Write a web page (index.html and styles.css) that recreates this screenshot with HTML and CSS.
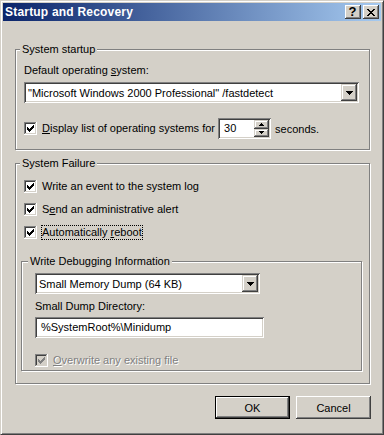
FILE: index.html
```html
<!DOCTYPE html>
<html lang="en">
<head>
  <meta charset="UTF-8">
  <meta name="viewport" content="width=device-width, initial-scale=1.0">
  <title>Startup and Recovery</title>
  <link rel="stylesheet" href="styles.css">
</head>
<body>
  <!-- shared glyphs -->
  <svg class="defs" aria-hidden="true">
    <symbol id="cb-on" viewBox="0 0 13 13">
      <rect width="13" height="13" fill="#fff"/>
      <path d="M0 0h12v1H1v11H0z" fill="#808080"/>
      <path d="M1 1h10v1H2v9H1z" fill="#404040"/>
      <path d="M11 1h1v11H1v-1h10z" fill="#d4d0c8"/>
      <path d="M9 3h1v1H9zM8 4h2v1H8zM3 5h1v1H3zM7 5h3v1H7zM3 6h2v1H3zM6 6h3v1H6zM3 7h5v1H3zM4 8h3v1H4zM5 9h1v1H5z" fill="#000"/>
    </symbol>
    <symbol id="cb-off" viewBox="0 0 13 13">
      <rect width="13" height="13" fill="#fff"/>
      <rect x="2" y="2" width="9" height="9" fill="#d4d0c8"/>
      <path d="M0 0h12v1H1v11H0z" fill="#808080"/>
      <path d="M1 1h10v1H2v9H1z" fill="#404040"/>
      <path d="M11 1h1v11H1v-1h10z" fill="#d4d0c8"/>
      <path d="M9 3h1v1H9zM8 4h2v1H8zM3 5h1v1H3zM7 5h3v1H7zM3 6h2v1H3zM6 6h3v1H6zM3 7h5v1H3zM4 8h3v1H4zM5 9h1v1H5z" fill="#808080"/>
    </symbol>
    <symbol id="drop" viewBox="0 0 7 4">
      <path d="M0 0h7v1H0zM1 1h5v1H1zM2 2h3v1H2zM3 3h1v1H3z" fill="#000"/>
    </symbol>
    <symbol id="up" viewBox="0 0 5 3">
      <path d="M2 0h1v1H2zM1 1h3v1H1zM0 2h5v1H0z" fill="#000"/>
    </symbol>
    <symbol id="down" viewBox="0 0 5 3">
      <path d="M0 0h5v1H0zM1 1h3v1H1zM2 2h1v1H2z" fill="#000"/>
    </symbol>
    <symbol id="close" viewBox="0 0 8 7">
      <path d="M0 0h2v1H0zM6 0h2v1H6zM1 1h2v1H1zM5 1h2v1H5zM2 2h4v1H2zM3 3h2v1H3zM2 4h4v1H2zM1 5h2v1H1zM5 5h2v1H5zM0 6h2v1H0zM6 6h2v1H6z" fill="#000"/>
    </symbol>
  </svg>

  <div class="dialog">
    <div class="titlebar">
      <span class="title">Startup and Recovery</span>
      <span class="cap-btn help">?</span>
      <span class="cap-btn"><svg width="8" height="7"><use href="#close"/></svg></span>
    </div>

    <div class="client">
      <div class="group startup">
        <span class="caption">System startup</span>
        <div class="label">Default operating <u>s</u>ystem:</div>
        <div class="combo os">
          <span class="value">"Microsoft Windows 2000 Professional" /fastdetect</span>
          <span class="drop-btn"><svg width="7" height="4"><use href="#drop"/></svg></span>
        </div>
        <div class="row">
          <svg class="cb" width="13" height="13"><use href="#cb-on"/></svg>
          <span class="lbl"><u>D</u>isplay list of operating systems for</span>
          <div class="spin">
            <span class="value">30</span>
            <span class="updown">
              <span class="ud-btn"><svg width="5" height="3"><use href="#up"/></svg></span>
              <span class="ud-btn"><svg width="5" height="3"><use href="#down"/></svg></span>
            </span>
          </div>
          <span class="after">seconds.</span>
        </div>
      </div>

      <div class="group failure">
        <span class="caption">System Failure</span>
        <div class="row cbrow">
          <svg class="cb" width="13" height="13"><use href="#cb-on"/></svg>
          <span class="lbl">Write an event to the system log</span>
        </div>
        <div class="row cbrow">
          <svg class="cb" width="13" height="13"><use href="#cb-on"/></svg>
          <span class="lbl">S<u>e</u>nd an administrative alert</span>
        </div>
        <div class="row cbrow">
          <svg class="cb" width="13" height="13"><use href="#cb-on"/></svg>
          <span class="lbl focus">Automatically <u>r</u>eboot</span>
        </div>

        <div class="group debug">
          <span class="caption">Write Debugging Information</span>
          <div class="combo dump">
            <span class="value">Small Memory Dump (64 KB)</span>
            <span class="drop-btn"><svg width="7" height="4"><use href="#drop"/></svg></span>
          </div>
          <div class="label dir">Small Dump Directory:</div>
          <div class="edit">%SystemRoot%\Minidump</div>
          <div class="row cbrow disabled">
            <svg class="cb" width="13" height="13"><use href="#cb-off"/></svg>
            <span class="lbl"><u>O</u>verwrite any existing file</span>
          </div>
        </div>
      </div>

      <div class="buttons">
        <button class="btn default">OK</button>
        <button class="btn">Cancel</button>
      </div>
    </div>
  </div>
</body>
</html>
```

FILE: styles.css
```css
* {
  margin: 0; padding: 0; box-sizing: border-box;
}
body {
  background: #d4d0c8;
  color: #000;
  font: 11px "Liberation Sans", Arial, sans-serif;
}
.defs {
  position: absolute;
  width: 0;
  height: 0;
}
svg { display: block; }

/* window frame */
.dialog {
  width: 384px;
  height: 435px;
  background: #d4d0c8;
  border: 1px solid;
  border-color: #d4d0c8 #404040 #404040 #d4d0c8;
  box-shadow: inset 1px 1px #fff, inset -1px -1px #808080;
  padding: 2px;
}
.titlebar {
  height: 18px;
  display: flex;
  align-items: center;
  gap: 2px;
  padding: 0 2px;
  background: linear-gradient(to right, #0a246a, #a6caf0);
}
.title {
  flex: 1;
  color: #fff;
  font-size: 12px;
  font-weight: bold;
  letter-spacing: 0.2px;
  padding-bottom: 1px;
}
.cap-btn {
  width: 16px;
  height: 14px;
  display: flex;
  align-items: center;
  justify-content: center;
  background: #d4d0c8;
  box-shadow: inset -1px -1px #404040, inset 1px 1px #fff, inset -2px -2px #808080;
}
.cap-btn svg { margin-left: -1px; }
.cap-btn.help {
  font-weight: bold;
  font-size: 13px;
  line-height: 14px;
  padding-right: 1px;
}

.client {
  padding: 28px 10px 0 12px;
}

/* group boxes */
.group {
  position: relative;
  width: 355px;
  border: 1px solid #808080;
  box-shadow: inset 1px 1px #fff, 1px 1px #fff;
}
.caption {
  position: absolute;
  top: -7px;
  left: 4px;
  padding: 0 2px;
  line-height: 13px;
  background: #d4d0c8;
}
.startup {
  height: 101px;
  padding: 14px 0 0 8px;
}
.failure {
  height: 221px;
  margin-top: 13px;
  padding: 16px 0 0 5px;
}
.debug {
  width: 341px;
  height: 110px;
  margin-top: 22px;
  padding: 11px 0 0 13px;
}
.debug .caption { left: 6px; }

.label { line-height: 13px; }
.label.dir { margin-top: 6px; }

/* fields */
.combo, .spin, .edit {
  background: #fff;
  height: 21px;
  padding: 2px;
  box-shadow: inset 1px 1px #808080, inset -1px -1px #fff, inset 2px 2px #404040, inset -2px -2px #d4d0c8;
}
.combo {
  display: flex;
  align-items: center;
}
.combo .value {
  flex: 1;
  padding-left: 2px;
  white-space: nowrap;
}
.combo.os {
  width: 335px;
  margin-top: 5px;
}
.combo.dump { width: 225px; }
.drop-btn {
  width: 16px;
  height: 17px;
  display: flex;
  align-items: center;
  justify-content: center;
  background: #d4d0c8;
  box-shadow: inset -1px -1px #404040, inset 1px 1px #d4d0c8, inset -2px -2px #808080, inset 2px 2px #fff;
}
.edit {
  width: 229px;
  margin-top: 4px;
  padding-left: 6px;
  line-height: 17px;
}
.spin {
  width: 53px;
  margin-left: 2px;
  display: flex;
}
.spin .value {
  flex: 1;
  padding-left: 4px;
  line-height: 17px;
}
.updown {
  width: 15px;
  display: flex;
  flex-direction: column;
}
.ud-btn {
  flex: 1;
  display: flex;
  align-items: center;
  justify-content: center;
  background: #d4d0c8;
  box-shadow: inset -1px -1px #404040, inset 1px 1px #d4d0c8, inset -2px -2px #808080, inset 2px 2px #fff;
}

/* checkbox rows */
.row {
  display: flex;
  align-items: center;
}
.startup .row {
  height: 21px;
  margin-top: 15px;
}
.cbrow {
  height: 13px;
  margin-left: 3px;
}
.cbrow + .cbrow { margin-top: 10px; }
.debug .cbrow {
  margin-left: 0;
  margin-top: 16px;
}
.cb { flex: none; }
.lbl {
  margin-left: 4px;
  line-height: 13px;
  border: 1px dotted transparent;
  white-space: nowrap;
}
.lbl.focus { border-color: #000; }
.after { margin-left: 4px; }
.disabled .lbl {
  color: #808080;
  text-shadow: 1px 1px 0 #fff;
}

/* push buttons */
.buttons {
  display: flex;
  justify-content: flex-end;
  gap: 6px;
  margin-top: 12px;
}
.btn {
  width: 75px;
  height: 23px;
  border: none;
  background: #d4d0c8;
  font: inherit;
  color: #000;
  box-shadow: inset -1px -1px #404040, inset 1px 1px #fff, inset -2px -2px #808080, inset 2px 2px #d4d0c8;
}
.btn.default {
  border: 1px solid #000;
  box-shadow: inset -1px -1px #404040, inset 1px 1px #fff, inset -2px -2px #808080;
}
```
